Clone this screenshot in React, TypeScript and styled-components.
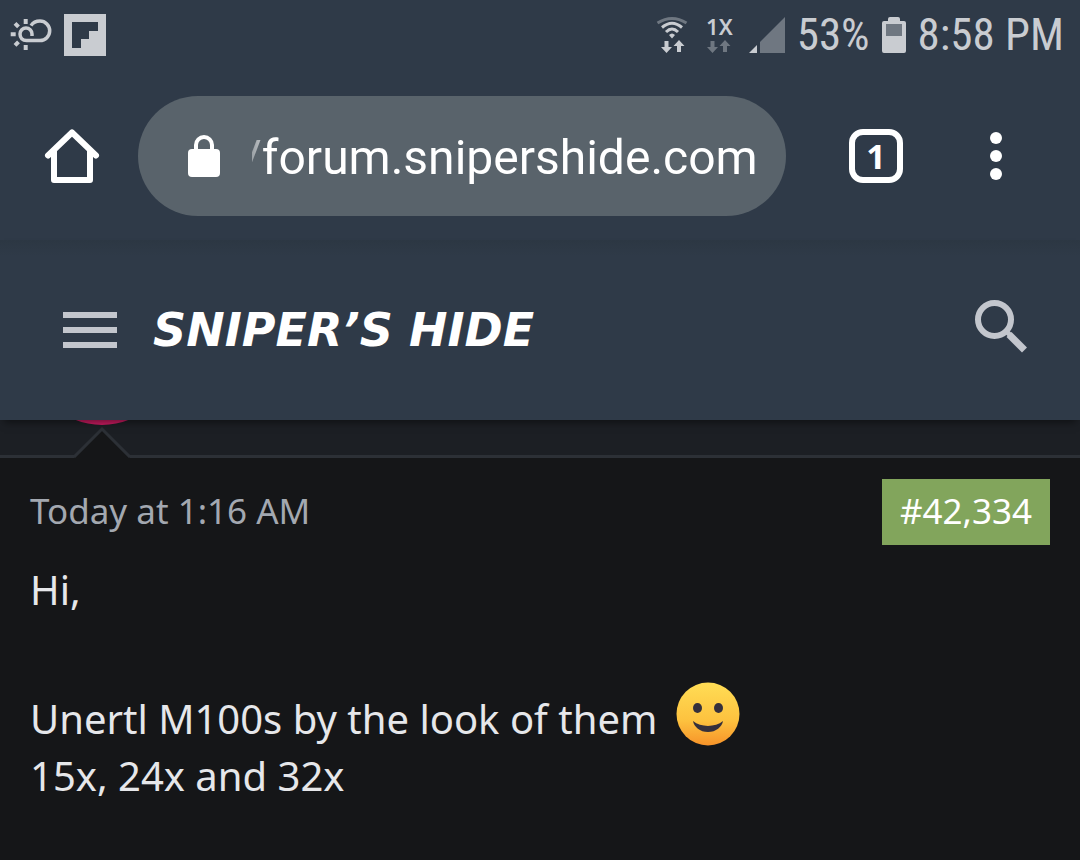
import React from "react";
import styled, { createGlobalStyle } from "styled-components";

const slate = "#2f3a48";
const soft = "#c9ccd1";
const dim = "#6f7781";

const GlobalStyle = createGlobalStyle`
  * { box-sizing: border-box; }
  html, body, #root { min-height: 100vh; }
  body {
    margin: 0;
    background: #151618;
    color: #e6e7ea;
    font-family: "Noto Sans", "Open Sans", sans-serif;
  }
`;

const Page = styled.div`
  display: flex;
  flex-direction: column;
  min-height: 100vh;
`;

const StatusBar = styled.div`
  display: flex;
  align-items: center;
  justify-content: space-between;
  height: 70px;
  padding: 0 16px 0 10px;
  background: ${slate};
  color: ${soft};
  font-family: "Roboto Condensed", Roboto, sans-serif;
  font-size: 45px;
  line-height: 48px;
`;

const StatusGroup = styled.div<{ $gap: number }>`
  display: flex;
  align-items: center;
  gap: ${(p) => p.$gap}px;
`;

const Icon = styled.svg`
  display: block;
  flex: none;
`;

const Network = styled.span`
  display: flex;
  flex-direction: column;
  align-items: center;
  gap: 5px;
  margin: 0 4px 0 6px;
  font-family: "Noto Sans", sans-serif;
  font-size: 22px;
  font-weight: 600;
  line-height: 18px;
`;

const BrowserBar = styled.div`
  display: flex;
  align-items: center;
  padding: 26px 74px 24px 44px;
  height: 170px;
  background: ${slate};
`;

const IconButton = styled.button`
  display: grid;
  place-items: center;
  flex: none;
  padding: 0;
  border: 0;
  background: none;
  color: inherit;
  cursor: pointer;
`;

const AddressPill = styled.label`
  display: flex;
  align-items: center;
  flex: 1;
  gap: 32px;
  min-width: 0;
  height: 120px;
  margin: 0 63px 0 38px;
  padding: 0 24px 0 50px;
  border-radius: 60px;
  background: #59636b;
`;

const Address = styled.input`
  flex: 1;
  min-width: 0;
  height: 64px;
  padding: 2px 0 0;
  border: 0;
  outline: 0;
  background: none;
  color: #fff;
  font-family: Roboto, sans-serif;
  font-size: 48px;
  text-indent: -10px;
  mask-image: linear-gradient(90deg, rgba(0, 0, 0, 0.4), rgba(0, 0, 0, 0.6) 9px, #000 10px);
`;

const TabsButton = styled(IconButton)`
  width: 54px;
  height: 54px;
  margin-right: 83px;
  border: 6px solid #fff;
  border-radius: 14px;
  color: #fff;
  font-family: "Noto Sans", sans-serif;
  font-size: 34px;
  font-weight: 700;
  line-height: 1;
`;

const SiteHeader = styled.header`
  position: relative;
  z-index: 1;
  display: flex;
  align-items: center;
  gap: 36px;
  height: 180px;
  padding: 0 52px 0 63px;
  background: linear-gradient(#2c3743, ${slate} 16px);
  box-shadow: 0 6px 8px -4px rgba(0, 0, 0, 0.5);
  color: #c3c6cd;
`;

const Brand = styled.a`
  flex: 1;
  color: #fff;
  font-family: "DejaVu Sans", sans-serif;
  font-size: 46px;
  font-style: italic;
  font-weight: 700;
  line-height: 48px;
  text-decoration: none;
  white-space: nowrap;
`;

const Author = styled.div`
  position: relative;
  height: 38px;
  border-bottom: 3px solid #2c3036;
  background: #1c1f24;
`;

const Avatar = styled.div`
  position: absolute;
  left: 30px;
  bottom: 30px;
  width: 144px;
  height: 144px;
  border-radius: 50%;
  background: #c81b60;
`;

const Pointer = styled.svg`
  position: absolute;
  left: 72px;
  bottom: -3px;
`;

const Post = styled.article`
  flex: 1;
  padding: 21px 30px;
  background: #151618;
`;

const PostHead = styled.div`
  display: flex;
  align-items: center;
  justify-content: space-between;
  height: 66px;
  font-size: 35px;
  line-height: 64px;
`;

const Posted = styled.a`
  height: 66px;
  color: #a3a8b0;
  text-decoration: none;
`;

const PostNumber = styled.a`
  height: 66px;
  padding: 0 18px;
  background: #82a55c;
  color: #fff;
  text-decoration: none;
`;

const Message = styled.p`
  margin: 16px 0 72px;
  font-size: 40px;
  line-height: 57px;

  & + & { margin: 0; }
`;

const Emoji = styled.svg`
  height: 64px;
  width: 64px;
  margin: -12px 0 -1px 8px;
  vertical-align: -11px;
`;

const DataArrows = ({ x, y, fill }: { x: number; y: number; fill: string }) => (
  <path
    transform={`translate(${x} ${y})`}
    stroke="none"
    fill={fill}
    d="M3.500 1h4v6H11l-5.500 6L0 7h3.500zM18 0l5.500 6H20v6h-4V6h-3.500z"
  />
);

export default function App() {
  return (
    <Page>
      <GlobalStyle />
      <StatusBar>
        <StatusGroup $gap={12}>
          <Icon width="42" height="34" viewBox="0 0 42 34" fill="none" stroke={soft} strokeWidth="3.500">
            <path d="M22 18v-2a6 6 0 0 0-12 0c0 4 2.500 6.500 6.500 6.500H30a9.700 9.700 0 0 0 0-19.400c-4 0-7 1.500-9 4.500" />
            <path strokeWidth="4" d="M15.700 1v5M15.700 27v5M.7 16.300h5M5 5.300l3.500 3.500M5 27.300l3.500-3.500" />
          </Icon>
          <Icon width="42" height="42" viewBox="0 0 42 42">
            <path fill={soft} fillRule="evenodd" d="M0 0h42v42H0zM8 8v26h9v-9h8v-8h9V8z" />
          </Icon>
        </StatusGroup>
        <StatusGroup $gap={12}>
          <Icon width="32" height="38" viewBox="0 0 32 38" fill="none" stroke={soft} strokeWidth="3">
            <path stroke={dim} d="M1.500 7q14.500-9 29 0" />
            <path d="M6 11.500q10-8.500 20 0M10 16q6-6 12 0" />
            <path stroke="none" fill={soft} d="M13 19q3-3 6 0l-3 3.500z" />
            <DataArrows x={5} y={24} fill={soft} />
          </Icon>
          <Network>
            1X
            <Icon width="24" height="14" viewBox="0 0 24 14">
              <DataArrows x={0} y={0} fill={dim} />
            </Icon>
          </Network>
          <Icon width="36" height="36" viewBox="0 0 36 36">
            <path fill={soft} d="M0 36l8-8v8z" />
            <path fill={dim} d="M11 36V25L36 0v36z" />
          </Icon>
          <span>53%</span>
          <Icon width="24" height="36" viewBox="0 0 24 36">
            <path fill={soft} d="M6 4V2q0-2 2-2h8q2 0 2 2v2h4q2 0 2 2v28q0 2-2 2H2q-2 0-2-2V6q0-2 2-2z" />
            <path fill={dim} d="M4 7h16v12H4z" />
          </Icon>
          <span>8:58 PM</span>
        </StatusGroup>
      </StatusBar>

      <BrowserBar>
        <IconButton aria-label="Home">
          <Icon width="56" height="56" viewBox="0 0 56 56" fill="none" stroke="#fff" strokeWidth="6" strokeLinejoin="round" strokeLinecap="round">
            <path d="M4 27.500L28 4.500l24 23" />
            <path strokeLinecap="butt" d="M10 23v29h36V23" />
          </Icon>
        </IconButton>
        <AddressPill>
          <Icon width="32" height="42" viewBox="0 0 32 42">
            <rect y="14" width="32" height="28" rx="4" fill="#fff" />
            <path fill="none" stroke="#fff" strokeWidth="4" d="M8 16V10a8 8 0 0 1 16 0v6" />
          </Icon>
          <Address aria-label="Address" defaultValue="/forum.snipershide.com" />
        </AddressPill>
        <TabsButton aria-label="Open tabs">1</TabsButton>
        <IconButton aria-label="Menu">
          <Icon width="20" height="48" viewBox="0 0 20 48" fill="#fff">
            <circle cx="10" cy="6" r="6" />
            <circle cx="10" cy="24" r="6" />
            <circle cx="10" cy="42" r="6" />
          </Icon>
        </IconButton>
      </BrowserBar>

      <SiteHeader>
        <IconButton aria-label="Navigation">
          <Icon width="54" height="36" viewBox="0 0 54 36" fill="currentColor">
            <path d="M0 0h54v6H0zM0 15h54v6H0zM0 30h54v6H0z" />
          </Icon>
        </IconButton>
        <Brand href="#">SNIPER’S HIDE</Brand>
        <IconButton aria-label="Search">
          <Icon width="54" height="60" viewBox="0 0 54 60" fill="none" stroke="currentColor">
            <circle cx="20.500" cy="19.500" r="16.500" strokeWidth="6" />
            <path strokeWidth="7" d="M35 34.500L50.500 50" />
            <path strokeWidth="5" d="M32 31l4 4" />
          </Icon>
        </IconButton>
      </SiteHeader>

      <Author>
        <Avatar />
        <Pointer width="60" height="32" viewBox="0 0 60 32">
          <path fill="#151618" d="M2 32L30 3l28 29z" />
          <path fill="none" stroke="#2c3036" strokeWidth="3" d="M2 31L30 3l28 28" />
        </Pointer>
      </Author>

      <Post>
        <PostHead>
          <Posted href="#">Today at 1:16 AM</Posted>
          <PostNumber href="#">#42,334</PostNumber>
        </PostHead>
        <Message>Hi,</Message>
        <Message>
          Unertl M100s by the look of them{" "}
          <Emoji viewBox="0 0 64 64" role="img" aria-label="smile">
            <defs>
              <linearGradient id="face" x1="0" y1="0" x2="0" y2="1">
                <stop offset="0" stopColor="#ffdd55" />
                <stop offset="0.600" stopColor="#fdc23f" />
                <stop offset="1" stopColor="#f79329" />
              </linearGradient>
            </defs>
            <circle cx="32" cy="32" r="31.500" fill="url(#face)" />
            <ellipse cx="21.500" cy="26" rx="4.500" ry="5" fill="#35303c" />
            <ellipse cx="42.500" cy="26" rx="4.500" ry="5" fill="#35303c" />
            <path fill="#35303c" d="M17 39c8 6.500 22 6.500 30 0c-1 6-7 11-15 11s-14-5-15-11z" />
          </Emoji>
          <br />
          15x, 24x and 32x
        </Message>
      </Post>
    </Page>
  );
}
